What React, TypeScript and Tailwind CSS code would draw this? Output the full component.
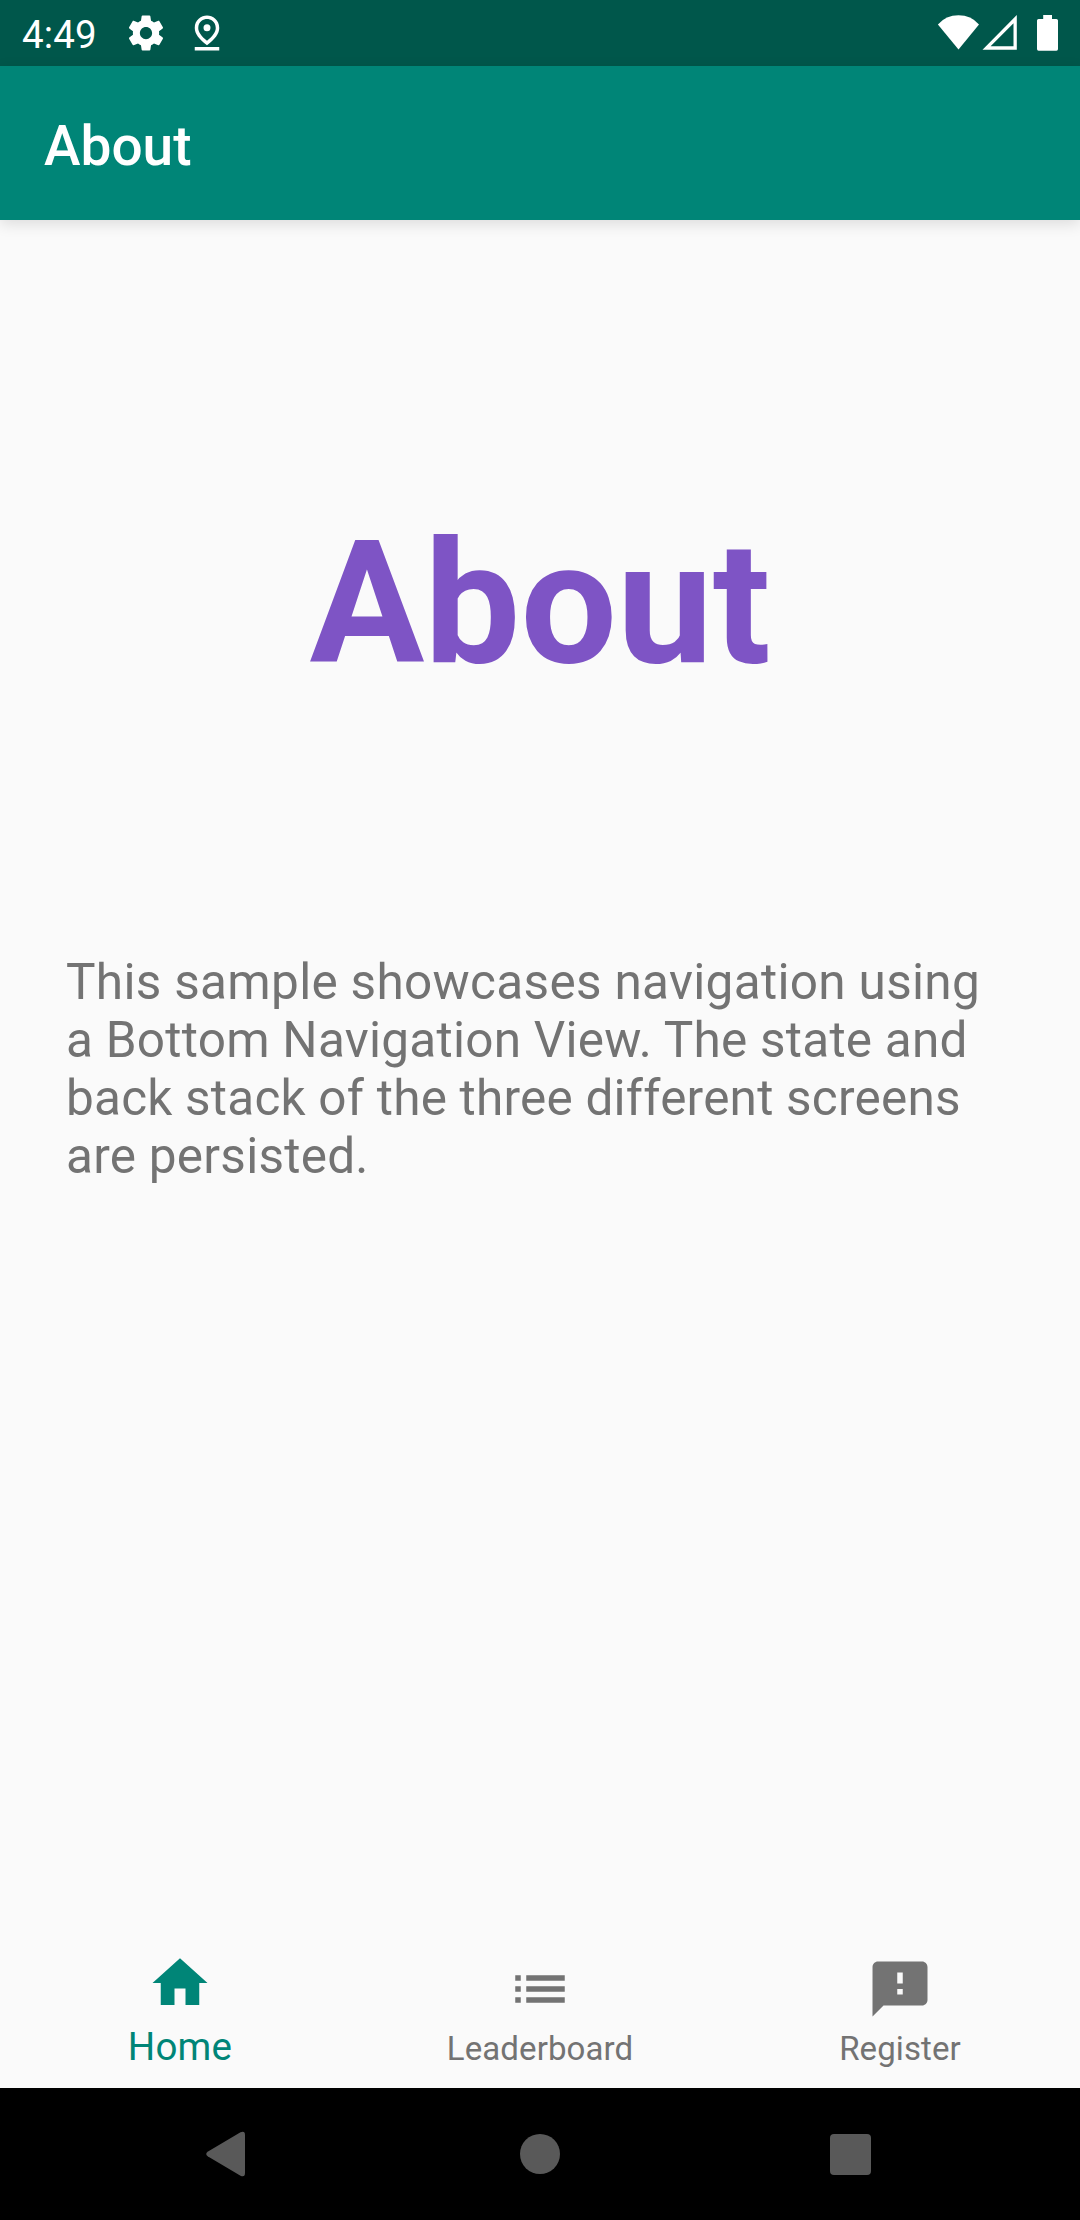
import type { ReactNode } from "react";

function StatusBar() {
  return (
    <div className="flex h-[66px] shrink-0 items-center bg-[#00574b] text-white">
      <span className="mt-[3px] ml-[22px] w-[75px] text-[38.5px] leading-[45px] tracking-[0.1px]">4:49</span>
      <svg className="ml-[28px]" width="42" height="42" viewBox="0 0 24 24" fill="currentColor">
        <path d="M19.43 12.98c.04-.32.07-.64.07-.98s-.03-.66-.07-.98l2.11-1.65c.19-.15.24-.42.12-.64l-2-3.46c-.12-.22-.39-.3-.61-.22l-2.49 1c-.52-.4-1.08-.73-1.69-.98l-.38-2.65C14.46 2.18 14.25 2 14 2h-4c-.25 0-.46.18-.49.42l-.38 2.65c-.61.25-1.17.59-1.69.98l-2.49-1c-.23-.09-.49 0-.61.22l-2 3.46c-.13.22-.07.49.12.64l2.11 1.65c-.04.32-.07.65-.07.98s.03.66.07.98l-2.11 1.65c-.19.15-.24.42-.12.64l2 3.46c.12.22.39.3.61.22l2.49-1c.52.4 1.08.73 1.69.98l.38 2.65c.03.24.24.42.49.42h4c.25 0 .46-.18.49-.42l.38-2.65c.61-.25 1.17-.59 1.69-.98l2.49 1c.23.09.49 0 .61-.22l2-3.46c.12-.22.07-.49-.12-.64l-2.11-1.65zM12 15.5c-1.93 0-3.5-1.57-3.5-3.5s1.57-3.5 3.5-3.5 3.5 1.57 3.5 3.5-1.57 3.5-3.5 3.5z" />
      </svg>
      <svg className="ml-[19px]" width="42" height="42" viewBox="0 0 24 24" fill="currentColor">
        <path d="M12 4c1.93 0 5 1.4 5 5.15 0 2.16-1.72 4.67-5 7.32-3.28-2.65-5-5.17-5-7.32C7 5.4 10.07 4 12 4m0-2C8.73 2 5 4.46 5 9.15c0 3.12 2.33 6.41 7 9.85 4.67-3.44 7-6.73 7-9.85C19 4.46 15.27 2 12 2zm0 5a2 2 0 1 0 0 4 2 2 0 0 0 0-4zM5 20h14v2H5z" />
      </svg>
      <div className="mr-[22px] ml-auto flex items-center">
        <svg width="42" height="66" viewBox="0 0 42 66" fill="currentColor">
          <path d="M.9 24.4Q9 15.3 21.5 15.3T42 24.4L21.5 49.4z" />
        </svg>
        <svg className="ml-[2px]" width="36" height="66" viewBox="0 0 36 66" fill="currentColor">
          <path fillRule="evenodd" d="M1.5 49.8 35.8 15v34.8zM9.6 46.3h22.9V23.3z" />
        </svg>
        <svg className="ml-[20px]" width="21" height="66" viewBox="0 0 21 66" fill="currentColor">
          <path d="M6.2 15h8.8v4h4.4a1.6 1.6 0 0 1 1.6 1.6v28.5a1.6 1.6 0 0 1-1.6 1.6H1.6A1.6 1.6 0 0 1 0 49.1V20.6A1.6 1.6 0 0 1 1.6 19h4.6z" />
        </svg>
      </div>
    </div>
  );
}

type TabProps = { label: string; selected?: boolean; children: ReactNode };

function Tab({ label, selected = false, children }: TabProps) {
  return (
    <button
      className={
        selected
          ? "flex flex-1 flex-col items-center pt-[16.25px] text-[#008577]"
          : "flex flex-1 flex-col items-center pt-[21.75px] text-[#737373]"
      }
    >
      <svg width="66" height="66" viewBox="0 0 24 24" fill="currentColor">
        {children}
      </svg>
      <span
        className={
          selected
            ? "mt-[7.75px] text-[38.5px] leading-[45px] tracking-[0.2px]"
            : "mt-[7.25px] text-[33px] leading-[39px] tracking-[0.1px]"
        }
      >
        {label}
      </span>
    </button>
  );
}

export default function App() {
  return (
    <div className="flex h-[2220px] w-[1080px] flex-col overflow-hidden bg-[#fafafa] font-['Roboto',sans-serif]">
      <StatusBar />
      <header className="flex h-[154px] shrink-0 items-center bg-[#008577] pt-[6px] pl-[44px] shadow-[0_4px_14px_rgba(0,0,0,0.12)]">
        <span className="text-[55px] leading-[64px] font-medium text-white">About</span>
      </header>
      <main className="flex grow flex-col">
        <h1 className="mt-[281px] text-center text-[171px] leading-[206px] font-bold text-[#7e54c5]">About</h1>
        <p className="mt-[246px] ml-[66px] text-[49.5px] leading-[58px] text-[#737373]">
          <span className="block tracking-[0.31px]">This sample showcases navigation using</span>
          <span className="block tracking-[0.25px]">a Bottom Navigation View. The state and</span>
          <span className="block tracking-[0.22px]">back stack of the three different screens</span>
          <span className="block tracking-[0.25px]">are persisted.</span>
        </p>
      </main>
      <nav className="flex h-[154px] shrink-0 items-start">
        <Tab label="Home" selected>
          <path d="M10 20v-6h4v6h5v-8h3L12 3 2 12h3v8z" />
        </Tab>
        <Tab label="Leaderboard">
          <path d="M3 13h2v-2H3v2zm0 4h2v-2H3v2zm0-8h2V7H3v2zm4 4h14v-2H7v2zm0 4h14v-2H7v2zM7 7v2h14V7H7z" />
        </Tab>
        <Tab label="Register">
          <path d="M20 2H4c-1.1 0-1.99.9-1.99 2L2 22l4-4h14c1.1 0 2-.9 2-2V4c0-1.1-.9-2-2-2zm-7 12h-2v-2h2v2zm0-4h-2V6h2v4z" />
        </Tab>
      </nav>
      <div className="flex h-[132px] shrink-0 items-center bg-black pl-[206px]">
        <svg width="40" height="46" viewBox="0 0 40 46" fill="#595959">
          <path d="M34.5 1.3Q39 -.5 39 4V42Q39 46.500 34.5 44.7L2 25.500Q-1.600 23 2 20.500z" />
        </svg>
        <span className="ml-[274px] size-[40px] rounded-full bg-[#595959]" />
        <span className="ml-[270px] size-[41px] rounded-[4px] bg-[#595959]" />
      </div>
    </div>
  );
}
